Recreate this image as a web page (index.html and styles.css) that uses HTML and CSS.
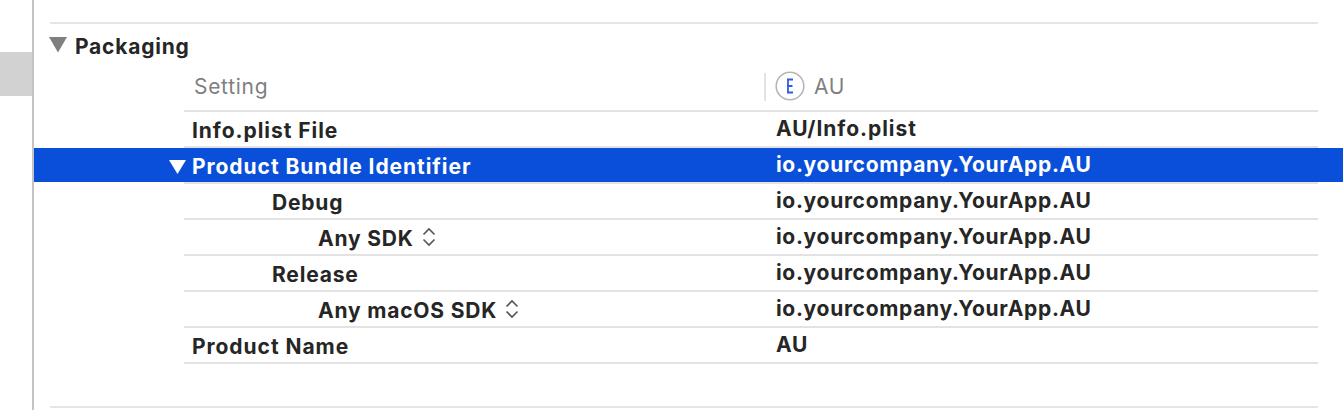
FILE: index.html
```html
<!DOCTYPE html>
<html lang="en">
<head>
<meta charset="utf-8">
<title>Packaging</title>
<link rel="stylesheet" href="styles.css">
</head>
<body>
<div class="app">
  <aside class="sidebar"><div class="sidebar-sel"></div></aside>
  <main class="editor">
    <section class="section">
      <h2 class="section-title">
        <svg class="tri-section" width="18" height="16" viewBox="0 0 18 16"><path d="M0 0H18L9 15.500Z"/></svg>
        Packaging
      </h2>
      <div class="table">
        <div class="head">
          <div class="head-setting">Setting</div>
          <div class="head-target">
            <span class="head-sep"></span>
            <svg class="target-icon" width="30" height="30" viewBox="0 0 30 30"><circle cx="15" cy="15" r="13.800" fill="none" stroke="#b5b5b5" stroke-width="1.600"/><path d="M12 8.500H18M13 8.500V21.500M12 15H17.500M12 21.500H18" fill="none" stroke="#2f5be8" stroke-width="1.800"/></svg>
            <span class="head-name">AU</span>
          </div>
        </div>
        <div class="row"><div class="name wide">Info.plist File</div><div class="val wide">AU/Info.plist</div></div>
        <div class="row selected">
          <div class="name wide"><svg class="tri-row" width="17" height="14" viewBox="0 0 17 14"><path d="M0 0H17L8.500 14Z"/></svg>Product Bundle Identifier</div>
          <div class="val">io.yourcompany.YourApp.AU</div>
        </div>
        <div class="row"><div class="name lvl1">Debug</div><div class="val">io.yourcompany.YourApp.AU</div></div>
        <div class="row">
          <div class="name lvl2">Any SDK<svg class="stepper" width="14" height="20" viewBox="0 0 14 20"><path d="M1.500 7.500L7 2L12.500 7.500M1.500 12.500L7 18L12.500 12.500"/></svg></div>
          <div class="val">io.yourcompany.YourApp.AU</div>
        </div>
        <div class="row"><div class="name lvl1">Release</div><div class="val">io.yourcompany.YourApp.AU</div></div>
        <div class="row">
          <div class="name lvl2">Any macOS SDK<svg class="stepper" width="14" height="20" viewBox="0 0 14 20"><path d="M1.500 7.500L7 2L12.500 7.500M1.500 12.500L7 18L12.500 12.500"/></svg></div>
          <div class="val">io.yourcompany.YourApp.AU</div>
        </div>
        <div class="row"><div class="name wide">Product Name</div><div class="val">AU</div></div>
      </div>
    </section>
  </main>
</div>
</body>
</html>
```

FILE: styles.css
```css
* { box-sizing: border-box; }
html, body { margin: 0; height: 100%; overflow: hidden; background: #fff; }
body { font-family: Inter, "Liberation Sans", sans-serif; color: #262626; }
.app { display: flex; width: 1343px; height: 410px; }
.sidebar { width: 34px; flex: none; border-right: 2px solid #c4c4c4; padding-top: 52px; }
.sidebar-sel { height: 44px; background: #d2d2d2; }
.editor { flex: 1; padding: 22px 25px 0 16px; }
.section { height: 386px; border-top: 2px solid #e5e5e5; border-bottom: 2px solid #e5e5e5; position: relative; }
.section-title { display: flex; align-items: center; gap: 8px; margin: 0; height: 42px; padding-top: 3px; font-size: 21px; font-weight: 700; line-height: 42px; letter-spacing: .78px; }
.tri-section { fill: #7f7f7f; margin: -3px 0 0 -1px; }
.table { margin-left: 134px; }
.head { display: flex; height: 46px; border-bottom: 2px solid #e3e3e3; color: #7f7f7f; font-size: 21px; letter-spacing: .7px; }
.head-setting { width: 580px; padding-left: 10px; padding-top: 8px; }
.head-target { display: flex; align-items: center; gap: 9px; height: 30px; margin-top: 5px; }
.head-name { padding-top: 1px; }
.head-sep { width: 2px; height: 28px; background: #e3e3e3; margin-top: 2px; }
.row { display: flex; height: 36px; border-bottom: 2px solid #e3e3e3; font-size: 21px; font-weight: 700; align-items: center; }
.name { width: 592px; padding-left: 8px; padding-top: 2px; display: flex; align-items: center; position: relative; letter-spacing: .8px; }
.val { margin-top: -1px; letter-spacing: .68px; }
.name.wide, .val.wide { letter-spacing: .95px; }
.lvl1 { padding-left: 88px; }
.lvl2 { padding-left: 134px; }
.stepper { margin-left: 8px; margin-top: -2px; fill: none; stroke: #555; stroke-width: 1.600; }
.selected { position: relative; color: #fff; z-index: 0; }
.selected::before { content: ""; position: absolute; z-index: -1; left: -150px; right: -25px; top: 0; height: 34px; background: #0a4fda; }
.tri-row { position: absolute; left: -15px; top: 8px; fill: #fff; }
```
